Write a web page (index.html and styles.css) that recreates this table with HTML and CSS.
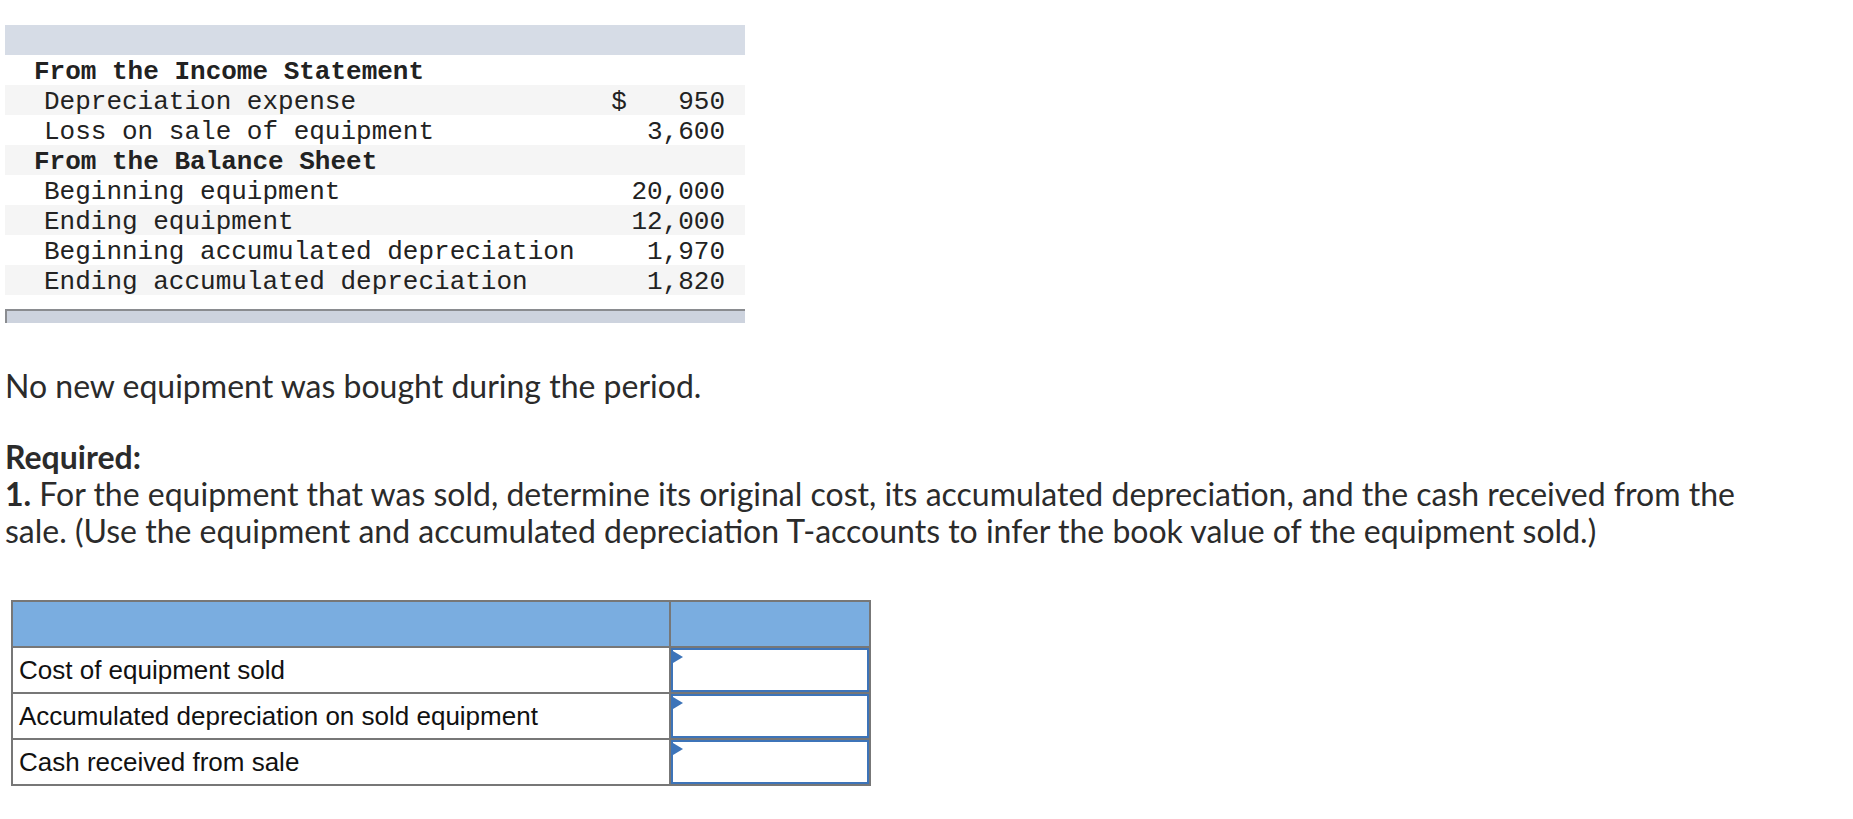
FILE: index.html
```html
<!DOCTYPE html>
<html>
<head>
<meta charset="utf-8">
<link rel="stylesheet" href="styles.css">
</head>
<body>
<div class="page">
  <div class="data">
    <div class="band"></div>
    <div class="row head">From the Income Statement</div>
    <div class="row alt"><span class="label">Depreciation expense</span><span class="cur">$</span><span class="amt">950</span></div>
    <div class="row"><span class="label">Loss on sale of equipment</span><span class="cur"></span><span class="amt">3,600</span></div>
    <div class="row head alt">From the Balance Sheet</div>
    <div class="row"><span class="label">Beginning equipment</span><span class="cur"></span><span class="amt">20,000</span></div>
    <div class="row alt"><span class="label">Ending equipment</span><span class="cur"></span><span class="amt">12,000</span></div>
    <div class="row"><span class="label">Beginning accumulated depreciation</span><span class="cur"></span><span class="amt">1,970</span></div>
    <div class="row alt"><span class="label">Ending accumulated depreciation</span><span class="cur"></span><span class="amt">1,820</span></div>
    <div class="foot"></div>
  </div>

  <p class="note">No new equipment was bought during the period.</p>

  <div class="req">
    <div class="req-title">Required:</div>
    <div class="req-body"><strong>1.</strong> For the equipment that was sold, determine its original cost, its accumulated depreciation, and the cash received from the sale. (Use the equipment and accumulated depreciation T-accounts to infer the book value of the equipment sold.)</div>
  </div>

  <div class="answer">
    <div class="hcell"></div>
    <div class="hcell"></div>
    <div class="lcell">Cost of equipment sold</div>
    <div class="icell"><span class="flag"></span></div>
    <div class="lcell">Accumulated depreciation on sold equipment</div>
    <div class="icell"><span class="flag"></span></div>
    <div class="lcell">Cash received from sale</div>
    <div class="icell"><span class="flag"></span></div>
  </div>
</div>
</body>
</html>
```

FILE: styles.css
```css
html, body {
  margin: 0;
  padding: 0;
  background: #ffffff;
}

.page {
  padding: 25px 0 0 5px;
  font-family: Lato, "Open Sans", sans-serif;
  color: #2b2b2b;
}

.data {
  width: 740px;
  font-family: "Liberation Mono", "Courier New", monospace;
  font-size: 26px;
  color: #222;
}

.band {
  height: 30px;
  background: #d6dce6;
}

.row {
  box-sizing: border-box;
  display: flex;
  align-items: center;
  height: 30px;
  padding: 3px 20px 0 39px;
  white-space: pre;
}

.row.alt {
  background: #f5f5f5;
}

.row.head {
  font-weight: bold;
  padding-left: 29px;
}

.label {
  flex: 1;
}

.cur {
  width: 16px;
  text-align: center;
}

.amt {
  width: 98px;
  text-align: right;
}

.foot {
  margin-top: 14px;
  height: 12px;
  background: #cdd3de;
  border-top: 2px solid #8a8c90;
  border-left: 2px solid #8a8c90;
}

.note {
  margin: 44px 0 0 0;
  font-size: 32px;
  line-height: 37px;
}

.req {
  margin-top: 34px;
  width: 1770px;
  font-size: 32px;
  line-height: 37px;
}

.req-title {
  font-weight: bold;
}

.answer {
  margin: 51px 0 0 6px;
  display: grid;
  grid-template-columns: 656px 198px;
  grid-auto-rows: 44px;
  gap: 2px;
  width: max-content;
  background: #777777;
  border: 2px solid #777777;
  font-family: "Liberation Sans", Arial, sans-serif;
  font-size: 26px;
  color: #111;
}

.hcell {
  background: #7aade0;
}

.lcell {
  background: #ffffff;
  display: flex;
  align-items: center;
  padding-left: 6px;
}

.icell {
  position: relative;
  background: #ffffff;
  border: 2px solid #3d74b9;
}

.flag {
  position: absolute;
  left: 0;
  top: 1px;
  width: 0;
  height: 0;
  border-left: 10px solid #3d74b9;
  border-top: 6px solid transparent;
  border-bottom: 6px solid transparent;
}
```
